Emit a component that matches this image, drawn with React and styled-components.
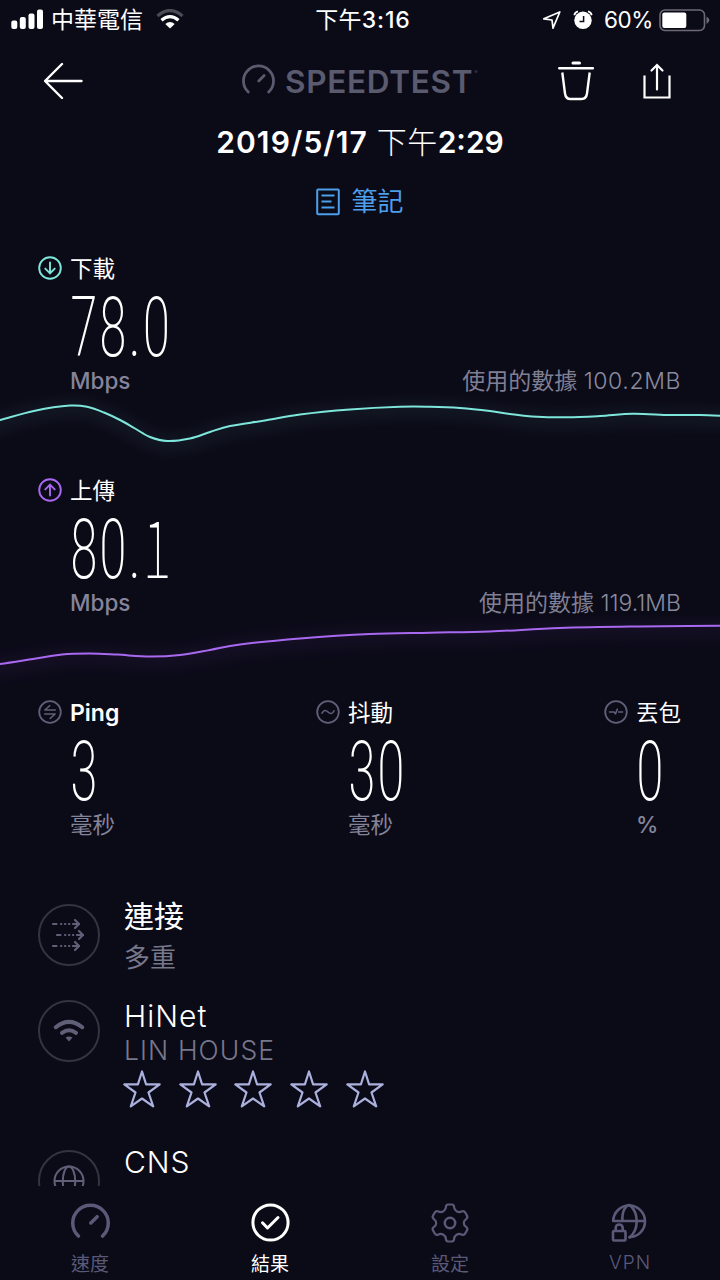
import styled, { createGlobalStyle } from "styled-components";

const downloadPoints = [
  [-30, 428], [0, 420], [35, 410.7], [70, 405.6], [88, 407], [104, 412.5], [120, 420], [135, 428.5],
  [150, 437], [167, 441], [190, 438.5], [210, 432], [230, 426], [265, 420.5], [300, 414.5], [350, 409.5],
  [400, 406.8], [430, 406.8], [460, 408], [490, 411], [510, 414], [532, 416.4], [567, 417.3],
  [600, 416], [633, 413.7], [670, 415], [700, 415], [750, 417],
];
const uploadPoints = [
  [-30, 667], [0, 664], [33, 659], [62, 654.5], [90, 653.5], [117, 654.6], [150, 656.5], [180, 655],
  [210, 650], [240, 644.5], [300, 638.5], [370, 634], [430, 632.7], [490, 631.5], [560, 628],
  [640, 626.5], [750, 625.5],
];

// smooth line through the samples
const toPath = (pts, top) => {
  let d = `M${pts[0][0]} ${pts[0][1] - top}`;
  for (let i = 0; i < pts.length - 1; i++) {
    const p0 = pts[i - 1] || pts[i];
    const p1 = pts[i];
    const p2 = pts[i + 1];
    const p3 = pts[i + 2] || p2;
    const c1 = [p1[0] + (p2[0] - p0[0]) / 6, p1[1] + (p2[1] - p0[1]) / 6 - top];
    const c2 = [p2[0] - (p3[0] - p1[0]) / 6, p2[1] - (p3[1] - p1[1]) / 6 - top];
    d += ` C${c1} ${c2} ${p2[0]} ${p2[1] - top}`;
  }
  return d;
};

const Graph = ({ points, top, color }) => (
  <GraphSvg viewBox="0 0 720 80" fill="none">
    <defs>
      <filter id={`glow${top}`} x="-5%" y="-100%" width="110%" height="300%">
        <feGaussianBlur stdDeviation="8" />
      </filter>
    </defs>
    <path d={toPath(points, top - 3)} stroke={color} strokeWidth="14" opacity="0.08" filter={`url(#glow${top})`} />
    <path d={toPath(points, top)} stroke={color} strokeWidth="2" />
  </GraphSvg>
);

const Dial = ({ size, width, color }) => (
  <svg width={size} height={size} viewBox="1 1 38 38" fill="none" stroke={color} strokeWidth={width} strokeLinecap="round">
    <path d="M8.2 33.2A17.3 17.3 0 1 1 31.8 33.2" />
    <path d="M20.3 20.5L26.5 14.3" />
  </svg>
);

const kinds = {
  down: <path d="M12 6.5v11M7.3 12.6l4.7 4.7 4.7-4.7" />,
  up: <path d="M12 17.5v-11M7.3 11.4L12 6.7l4.7 4.7" />,
  ping: <path d="M17.3 10H6.8l5-4.4M6.7 14h10.5l-5 4.4" strokeWidth="1.5" />,
  jitter: <path d="M6 13.2c1.8-3.4 3.7-3.4 6-1.2s4.2 2.2 6-1.2" strokeWidth="1.6" />,
  loss: <path d="M5.5 12h4.5l1.5 1.8 1.8-4.6M14.6 12h4" strokeWidth="1.6" />,
};

const RoundIcon = ({ kind, color, width = 1.9 }) => (
  <svg width="24" height="24" viewBox="0 0 24 24" fill="none" stroke={color} strokeWidth={width} strokeLinecap="round" strokeLinejoin="round">
    <circle cx="12" cy="12" r="10.8" strokeWidth={width} />
    {kinds[kind]}
  </svg>
);

const Speed = ({ kind, color, label, value, used, spacing, points, top }) => (
  <SpeedBlock>
    <Label><RoundIcon kind={kind} color={color} /><span>{label}</span></Label>
    <Value>{value}</Value>
    <SpeedFoot>
      <Unit $latin>Mbps</Unit>
      <Used>使用的數據 <Amount $spacing={spacing}>{used}</Amount></Used>
    </SpeedFoot>
    <Graph points={points} top={top} color={color} />
  </SpeedBlock>
);

const Metric = ({ kind, label, value, unit, latin, latinUnit }) => (
  <div>
    <Label $latin={latin}><RoundIcon kind={kind} color="#5f5f7a" width={1.8} /><span>{label}</span></Label>
    <Value>{value}</Value>
    <MetricUnit $latin={latinUnit}>{unit}</MetricUnit>
  </div>
);

const Arrows = () => (
  <svg width="36" height="36" viewBox="0 0 36 36" fill="none" stroke="#5f6078" strokeWidth="2.2" strokeLinecap="round" strokeLinejoin="round">
    {[[2, 7], [6, 18], [2, 29]].map(([x, y]) => (
      <g key={y}>
        <path d={`M${x} ${y}h3.5M${x + 8} ${y}h.3M${x + 12} ${y}h.3M${x + 16} ${y}h.3M${x + 20} ${y}h6`} />
        <path d={`M${x + 22} ${y - 4}l4 4-4 4`} />
      </g>
    ))}
  </svg>
);

const WifiMark = () => (
  <svg width="32" height="24" viewBox="0 0 32 24" fill="none" stroke="#5f6078" strokeWidth="4" strokeLinecap="round">
    <path d="M2.8 8.2Q16-2.4 29.2 8.2" />
    <path d="M9 13.8Q16 8.6 23 13.8" />
    <path d="M12.5 18.5Q16 16.4 19.5 18.5L16 22.5Z" fill="#5f6078" stroke="none" />
  </svg>
);

const Globe = () => (
  <svg width="32" height="32" viewBox="0 0 32 32" fill="none" stroke="#5f6078" strokeWidth="2">
    <circle cx="16" cy="16" r="14.5" />
    <ellipse cx="16" cy="16" rx="6.2" ry="14.5" />
    <path d="M1.5 16h29" />
  </svg>
);

const Star = () => (
  <svg width="38" height="38" viewBox="0 0 38 38" fill="none" stroke="#abb0dd" strokeWidth="2.2" strokeLinejoin="round">
    <path d="M19 1.5L23.1 14.3H36.7L25.5 22.5L30.2 36.3L19 28.5L7.8 36.3L12.5 22.5L1.3 14.3H14.9Z" />
  </svg>
);

const Gear = () => (
  <svg width="40" height="40" viewBox="0 0 40 40" fill="none" stroke="#5a5a78" strokeWidth="2.2" strokeLinejoin="round">
    <path d="M15.8 4.6Q16 1.5 18 1.5H22Q24 1.5 24.2 4.6Q24.4 7 27 8.5Q29.3 9.7 31.5 8.6Q34 7.5 35.2 9.5L37 12.6Q38.2 14.6 35.8 16.3Q33.8 17.6 33.8 20T35.8 23.7Q38.2 25.4 37 27.4L35.2 30.5Q34 32.5 31.5 31.4Q29.3 30.3 27 31.5Q24.4 33 24.2 35.4Q24 38.5 22 38.5H18Q16 38.5 15.8 35.4Q15.6 33 13 31.5Q10.7 30.3 8.5 31.4Q6 32.5 4.8 30.5L3 27.4Q1.8 25.4 4.2 23.7Q6.2 22.4 6.2 20T4.2 16.3Q1.8 14.6 3 12.6L4.8 9.5Q6 7.5 8.5 8.6Q10.7 9.7 13 8.5Q15.6 7 15.8 4.6Z" />
    <circle cx="20" cy="20" r="5.2" strokeWidth="2.5" />
  </svg>
);

const CheckMark = () => (
  <svg width="40" height="40" viewBox="0 0 40 40" fill="none" stroke="#fff" strokeWidth="3" strokeLinecap="round" strokeLinejoin="round">
    <circle cx="20.5" cy="19.5" r="17.6" />
    <path d="M12.5 19.8l5 5.2L28 14.5" />
  </svg>
);

const VpnMark = () => (
  <svg width="40" height="40" viewBox="0 0 40 40" fill="none" stroke="#5a5a78" strokeWidth="2.6" strokeLinecap="round">
    <path d="M3.2 18A15.9 15.9 0 1 1 19.500 34.300M3.200 18H35" />
    <path d="M18.500 2.200C11 6 12.500 18 12.500 18M20 2.200C29 10 29 27 19.500 34.300" />
    <rect x="3" y="28" width="12.5" height="9.5" rx="1" />
    <path d="M5.7 27.5v-2.500a3.500 3.500 0 0 1 7 0V27.500" />
  </svg>
);

const App = () => {
  return (
    <>
      <GlobalStyle />
      <Screen>
        <StatusBar>
          <StatusLeft>
            <svg width="33" height="20" viewBox="0 0 33 20" fill="#fff">
              <rect x="0.3" y="11.5" width="6" height="8.5" rx="2" />
              <rect x="8.8" y="8" width="6" height="12" rx="2" />
              <rect x="17.5" y="4.5" width="6" height="15.5" rx="2" />
              <rect x="26" y="0.5" width="6" height="19.5" rx="2" />
            </svg>
            <Carrier>中華電信</Carrier>
            <svg width="28" height="20" viewBox="0 0 28 20" fill="none" strokeWidth="3.2">
              <path d="M1.5 7Q14-4 26.5 7" stroke="#4b4a55" />
              <path d="M5.5 11.2Q14 4 22.5 11.2" stroke="#fff" />
              <path d="M9.3 15Q14 11.2 18.7 15L14 19.5Z" fill="#fff" />
            </svg>
          </StatusLeft>
          <Clock><span>下午</span>3:16</Clock>
          <StatusRight>
            <svg width="20" height="20" viewBox="0 0 20 20" fill="none" stroke="#fff" strokeWidth="1.7" strokeLinejoin="round">
              <path d="M1.8 8.8L17.8 2L11 18.2L10 10Z" />
            </svg>
            <svg width="20" height="20" viewBox="0 0 20 20">
              <circle cx="10" cy="10.3" r="8.7" fill="#fff" />
              <path d="M10.6 6v5.500H6.500" fill="none" stroke="#0b0a17" strokeWidth="1.5" />
              <path d="M1.300 5.200Q2 2.200 5 1.400M18.700 5.200Q18 2.200 15 1.400" fill="none" stroke="#fff" strokeWidth="1.8" />
            </svg>
            <Percent>60%</Percent>
            <svg width="51" height="23" viewBox="0 0 51 23">
              <rect x="1" y="1" width="44.5" height="20.5" rx="5" fill="none" stroke="#6b6a75" strokeWidth="1.6" />
              <rect x="3.3" y="3.5" width="24" height="15.5" rx="2" fill="#fff" />
              <path d="M47.5 7.5Q50.3 9 50.3 11.2T47.5 15Z" fill="#6b6a75" />
            </svg>
          </StatusRight>
        </StatusBar>

        <Header>
          <svg width="40" height="38" viewBox="1 0 40 38" fill="none" stroke="#fff" strokeWidth="2.4" strokeLinecap="round" strokeLinejoin="round">
            <path d="M19 2L2 19L19 36M2 19H38.5" />
          </svg>
          <Brand>
            <Dial size={33} width={3.2} color="#5b5b70" />
            <BrandName>SPEEDTEST</BrandName>
            <BrandDot>®</BrandDot>
          </Brand>
          <Actions>
            <svg width="36" height="40" viewBox="0 0 36 40" fill="none" stroke="#fff" strokeWidth="2.4">
              <path d="M15 2H21.5" strokeWidth="3" strokeLinecap="round" />
              <path d="M1.2 7.3H35" strokeLinecap="round" />
              <path d="M4.3 11.5L7 32.5Q7.8 38 12.5 38H23.5Q28.2 38 29 32.5L31.7 11.5" />
            </svg>
            <svg width="28" height="36" viewBox="0 0 28 36" fill="none" stroke="#fff" strokeWidth="2.2">
              <path d="M1.5 12.5V34.5H26.5V12.5" />
              <path d="M14 26.5V2M8.5 7.5L14 2L19.5 7.5" strokeLinecap="round" />
            </svg>
          </Actions>
        </Header>

        <Title>2019/5/17 <em>下午</em><span>2:29</span></Title>

        <Note>
          <svg width="24" height="28" viewBox="0 0 24 28" fill="none" stroke="#4d9fec" strokeWidth="2">
            <rect x="1.2" y="1.5" width="21.6" height="24.8" rx="1" />
            <path d="M5.5 7.5H18.5M5.5 13.5H15.5M5.5 19.5H18.5" />
          </svg>
          <NoteText>筆記</NoteText>
        </Note>

        <Speed kind="down" color="#7ee6da" label="下載" value="78.0" used="100.2MB" spacing={0.6} points={downloadPoints} top={393} />
        <Speed kind="up" color="#a869f0" label="上傳" value={<>80.<Footed>1</Footed></>} used="119.1MB" spacing={0} points={uploadPoints} top={615} />

        <Metrics>
          <Metric kind="ping" label="Ping" value="3" unit="毫秒" latin />
          <Metric kind="jitter" label="抖動" value="30" unit="毫秒" />
          <Metric kind="loss" label="丟包" value="0" unit="%" latinUnit />
        </Metrics>

        <Details>
          <Detail $height={96}>
            <Ring><Arrows /></Ring>
            <DetailText>
              <Name $cjk>連接</Name>
              <Sub $cjk>多重</Sub>
            </DetailText>
          </Detail>
          <Detail $height={150}>
            <Ring><WifiMark /></Ring>
            <DetailText $shift={-1}>
              <Name>HiNet</Name>
              <Sub>LIN HOUSE</Sub>
              <Stars>
                {[1, 2, 3, 4, 5].map((n) => <Star key={n} />)}
              </Stars>
            </DetailText>
          </Detail>
          <Detail $height={80}>
            <Ring><Globe /></Ring>
            <DetailText $shift={-5}>
              <Name>CNS</Name>
            </DetailText>
          </Detail>
        </Details>

        <TabBar>
          <Tab><Dial size={39} width={3.4} color="#5a5a78" />速度</Tab>
          <Tab $active><CheckMark />結果</Tab>
          <Tab><Gear />設定</Tab>
          <Tab $latin><VpnMark />VPN</Tab>
        </TabBar>
      </Screen>
    </>
  );
};

export default App;

const GlobalStyle = createGlobalStyle`
  * { box-sizing: border-box; }
  body {
    margin: 0;
    background: #0b0a17;
  }
  svg { display: block; flex: none; }
`;

const Screen = styled.main`
  width: 720px;
  height: 1280px;
  overflow: hidden;
  display: flex;
  flex-direction: column;
  background: #0b0a17;
  color: #fff;
  font-family: Inter, "Noto Sans CJK TC", sans-serif;
  font-weight: 300;
`;

const StatusBar = styled.div`
  height: 40px;
  flex: none;
  padding: 0 10px 0 11px;
  display: grid;
  grid-template-columns: 1fr auto 1fr;
  align-items: center;
`;

const StatusLeft = styled.div`
  display: flex;
  align-items: center;
  svg { margin-top: -2px; }
`;

const Carrier = styled.span`
  font-size: 23px;
  line-height: 40px;
  font-weight: 400;
  margin: 0 13px 0 7px;
`;

const Clock = styled.div`
  font-size: 23px;
  line-height: 40px;
  font-weight: 500;
  letter-spacing: 0.9px;
  margin-left: 5px;
  span { font-weight: 400; letter-spacing: 0.2px; }
`;

const StatusRight = styled.div`
  display: flex;
  align-items: center;
  justify-content: flex-end;
  gap: 11px;
`;

const Percent = styled.span`
  font-size: 22.5px;
  line-height: 40px;
  font-weight: 400;
  letter-spacing: -0.4px;
  margin-right: -5px;
`;

const Header = styled.header`
  height: 80px;
  flex: none;
  padding: 1px 49px 0 44px;
  display: grid;
  grid-template-columns: 198px 1fr auto;
  align-items: center;
`;

const Brand = styled.div`
  display: flex;
  align-items: center;
  color: #5b5b70;
`;

const BrandName = styled.span`
  font-size: 31.5px;
  line-height: 40px;
  font-weight: 600;
  margin: 2px 0 0 10px;
  letter-spacing: 0.7px;
`;

const BrandDot = styled.span`
  font-size: 5px;
  margin: -18px 0 0 1px;
`;

const Actions = styled.div`
  display: flex;
  align-items: center;
  gap: 49px;
`;

const Title = styled.h1`
  margin: 0;
  height: 44px;
  flex: none;
  font-size: 30px;
  line-height: 44px;
  font-weight: 600;
  text-align: center;
  letter-spacing: 1.1px;
  em { font-style: normal; font-weight: 300; letter-spacing: 0.5px; }
  span { letter-spacing: 0; }
`;

const Note = styled.div`
  height: 76px;
  flex: none;
  display: flex;
  justify-content: center;
  align-items: center;
  gap: 12px;
  color: #4d9fec;
`;

const NoteText = styled.span`
  font-size: 26px;
  line-height: 40px;
  font-weight: 400;
  margin: 0 0 0 -1px;
`;

const SpeedBlock = styled.section`
  height: 222px;
  flex: none;
  padding-top: 13px;
`;

const Label = styled.div`
  height: 30px;
  padding-left: 38px;
  display: flex;
  align-items: center;
  gap: 8px;
  font-size: ${(p) => (p.$latin ? 23 : 22.5)}px;
  line-height: 30px;
  font-weight: ${(p) => (p.$latin ? 600 : 400)};
  span { margin-top: 1px; }
`;

const Value = styled.div`
  width: max-content;
  height: 84px;
  padding-top: 3px;
  margin-left: 70px;
  font-family: "Roboto Condensed", Roboto, sans-serif;
  font-stretch: 75%;
  font-size: 83px;
  font-weight: 200;
  line-height: 84px;
  letter-spacing: 2px;
  transform: scaleX(0.69);
  transform-origin: left center;
`;

const Footed = styled.span`
  font-family: "Noto Sans CJK TC", sans-serif;
  font-size: 80px;
  font-weight: 100;
  line-height: 1px;
`;

const SpeedFoot = styled.div`
  height: 26px;
  padding: 1px 39px 0 70px;
  display: flex;
  justify-content: space-between;
`;

const Unit = styled.span`
  font-size: 22.5px;
  line-height: 26px;
  color: #84849a;
  font-weight: ${(p) => (p.$latin ? 500 : 400)};
`;

const MetricUnit = styled(Unit)`
  display: block;
  margin: 1px 0 0 70px;
`;

const Used = styled.span`
  font-size: 23px;
  line-height: 26px;
  font-weight: 400;
  color: #7f7f94;
`;

const Amount = styled.span`
  font-weight: 300;
  color: #8a8a9f;
  letter-spacing: ${(p) => p.$spacing}px;
`;

const GraphSvg = styled.svg`
  width: 720px;
  height: 80px;
`;

const Metrics = styled.section`
  flex: none;
  height: 196px;
  padding-top: 13px;
  display: grid;
  grid-template-columns: 278px 288px 1fr;
`;

const Details = styled.section`
  flex: none;
  height: 306px;
  padding: 24px 38px 0;
  overflow: hidden;
`;

const Detail = styled.div`
  height: ${(p) => p.$height}px;
  display: flex;
  gap: 24px;
`;

const Ring = styled.div`
  width: 62px;
  height: 62px;
  flex: none;
  border: 2px solid #34343f;
  border-radius: 50%;
  display: flex;
  align-items: center;
  justify-content: center;
`;

const DetailText = styled.div`
  display: flex;
  flex-direction: column;
  margin-top: ${(p) => (p.$shift || 0) + 1}px;
`;

const Name = styled.div`
  font-size: 30px;
  line-height: ${(p) => (p.$cjk ? 42 : 34)}px;
  margin-top: ${(p) => (p.$cjk ? -10 : -1)}px;
  letter-spacing: ${(p) => (p.$cjk ? 0 : 1)}px;
  font-weight: ${(p) => (p.$cjk ? 400 : 300)};
`;

const Sub = styled.div`
  font-size: ${(p) => (p.$cjk ? 26 : 26.5)}px;
  line-height: ${(p) => (p.$cjk ? 42 : 34)}px;
  letter-spacing: ${(p) => (p.$cjk ? 0 : 1.1)}px;
  font-weight: ${(p) => (p.$cjk ? 400 : 300)};
  color: #77778c;
`;

const Stars = styled.div`
  display: flex;
  gap: 17.7px;
  margin-top: 3px;
  margin-left: -1px;
`;

const TabBar = styled.nav`
  flex: none;
  height: 94px;
  padding-top: 16px;
  display: grid;
  grid-template-columns: repeat(4, 1fr);
`;

const Tab = styled.div`
  display: grid;
  grid-template-rows: 41px 38px;
  justify-items: center;
  align-items: center;
  font-size: 19px;
  letter-spacing: ${(p) => (p.$latin ? 1 : 0)}px;
  font-weight: ${(p) => (p.$latin ? 300 : 400)};
  color: ${(p) => (p.$active ? "#fff" : "#5a5a78")};
`;
